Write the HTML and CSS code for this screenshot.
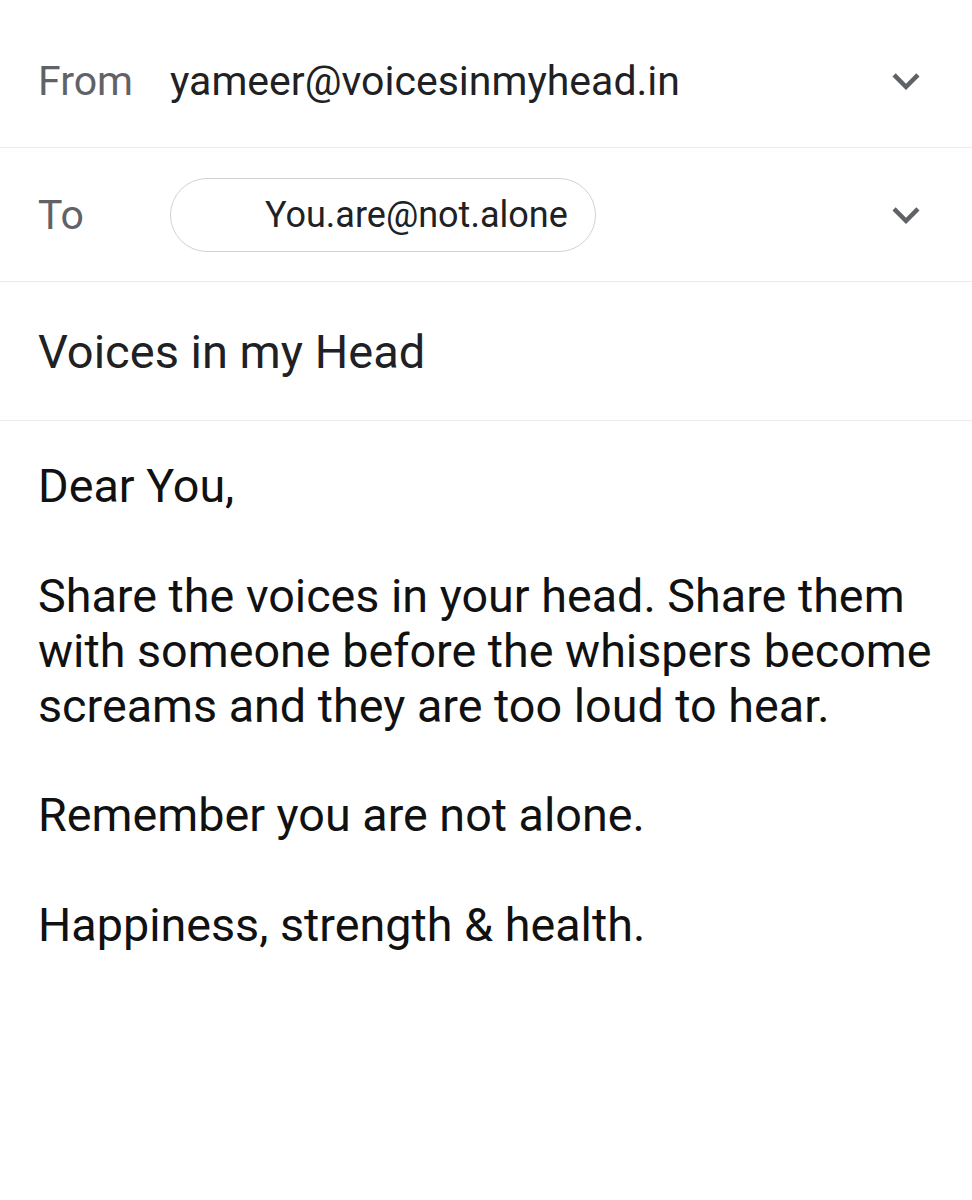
FILE: index.html
```html
<!DOCTYPE html>
<html lang="en">
<head>
    <meta charset="UTF-8">
    <meta name="viewport" content="width=device-width, initial-scale=1.0">
    <title>Compose - Voices in my Head</title>
    <link rel="stylesheet" href="styles.css">
</head>
<body>
    <main class="compose">
        <!-- From row -->
        <div class="field-row">
            <span class="field-label">From</span>
            <span class="field-value">yameer@voicesinmyhead.in</span>
            <svg class="expand-icon" viewBox="0 0 24 24"><path d="M16.59 8.59L12 13.17 7.41 8.59 6 10l6 6 6-6z"/></svg>
        </div>

        <!-- To row -->
        <div class="field-row">
            <span class="field-label">To</span>
            <span class="recipient-chip">You.are@not.alone</span>
            <svg class="expand-icon" viewBox="0 0 24 24"><path d="M16.59 8.59L12 13.17 7.41 8.59 6 10l6 6 6-6z"/></svg>
        </div>

        <!-- Subject -->
        <div class="subject-row">Voices in my Head</div>

        <!-- Message body -->
        <div class="message-body">
            <p>Dear You,</p>
            <p>Share the voices in your head. Share them with someone before the whispers become screams and they are too loud to hear.</p>
            <p>Remember you are not alone.</p>
            <p>Happiness, strength &amp; health.</p>
        </div>
    </main>
</body>
</html>
```

FILE: styles.css
```css
body {
    margin: 0;
    padding: 0;
    background-color: #fff;
    color: #1f1f1f;
    font-family: Roboto, "Noto Sans", Arial, sans-serif;
}

.compose {
    padding-top: 14px;
}

.field-row {
    display: flex;
    align-items: center;
    height: 133px;
    padding: 0 39px 0 38px;
    border-bottom: 1px solid #ebebeb;
}

.field-label {
    width: 132px;
    flex-shrink: 0;
    font-size: 41px;
    color: #5f6368;
}

.field-value {
    flex: 1;
    font-size: 41px;
    color: #202124;
}

.recipient-chip {
    display: inline-flex;
    align-items: center;
    height: 72px;
    padding: 0 27px 0 94px;
    border: 1.5px solid #d3d3d3;
    border-radius: 37px;
    font-size: 36px;
    color: #202124;
    margin-right: auto;
}

.expand-icon {
    width: 54px;
    height: 54px;
    flex-shrink: 0;
    fill: #5f6368;
}

.subject-row {
    display: flex;
    align-items: center;
    height: 138px;
    padding: 0 38px;
    border-bottom: 1px solid #ebebeb;
    font-size: 47px;
    color: #202124;
}

.message-body {
    padding: 38px 30px 0 38px;
    font-size: 46.7px;
    line-height: 54.9px;
    color: #111;
}

.message-body p {
    margin: 0 0 54.9px;
}
```
